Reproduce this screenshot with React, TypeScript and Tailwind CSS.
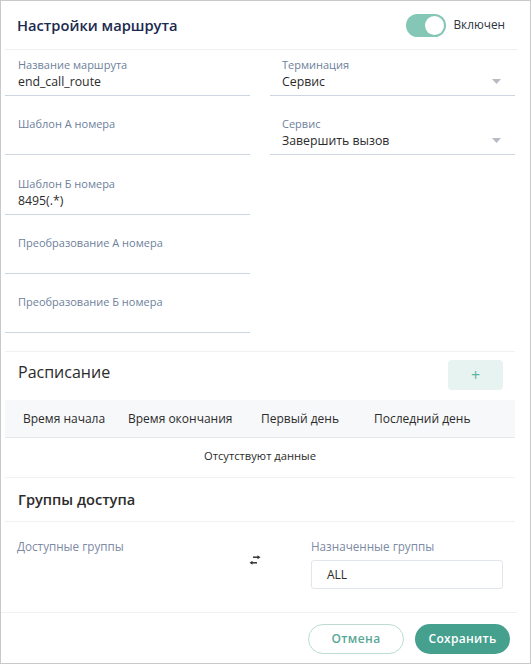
import React from 'react';

const FONT = "font-['Open_Sans',sans-serif]";

type FieldProps = { label: string; value?: string; select?: boolean; right?: boolean };

function Field({ label, value, select, right }: FieldProps) {
  return (
    <div className={`h-[46px] border-b border-[#cdd5e0] pt-[7px] relative ${right ? 'pl-[12px]' : 'pl-[13px]'}`}>
      <div className="text-[11px] leading-[16px] text-[#6e7f9c]">{label}</div>
      <div className="text-[12.3px] leading-[18px] text-[#2b2b2b]">{value ?? ''}</div>
      {select && (
        <svg className="absolute right-[14px] top-[29px]" width="9" height="5" viewBox="0 0 9 5">
          <path d="M0 0 L9 0 L4.5 5 Z" fill="#b7bcc4" />
        </svg>
      )}
    </div>
  );
}

function SwapIcon() {
  return (
    <svg width="12" height="10" viewBox="0 0 12 10">
      <path d="M4 2.2 H9.5" stroke="#333" strokeWidth="1.5" />
      <path d="M8.5 0.2 L11.5 2.2 L8.5 4.2 Z" fill="#333" />
      <path d="M8 7.8 H2.5" stroke="#333" strokeWidth="1.5" />
      <path d="M3.5 5.8 L0.5 7.8 L3.5 9.8 Z" fill="#333" />
    </svg>
  );
}

export default function App() {
  return (
    <div className={`${FONT} w-[531px] h-[664px] bg-white border border-[#c9c9c9] flex flex-col overflow-hidden`}>
      <div className="w-[516px] flex flex-col flex-1">
        {/* header */}
        <div className="ml-[4px] h-[49px] flex items-center justify-between border-b border-[#eef0f2] pl-[12px] pr-[12px]">
          <h2 className="text-[14.7px] font-semibold text-[#1b2a4e]">Настройки маршрута</h2>
          <div className="flex items-center gap-[8px]">
            <div className="w-[40px] h-[23px] rounded-full bg-[#84c7b6] flex items-center justify-end pr-[2px]">
              <div className="w-[19px] h-[19px] rounded-full bg-white" />
            </div>
            <span className="text-[11.8px] text-[#2e3440]">Включен</span>
          </div>
        </div>

        <div className="ml-[4px] w-[510px] flex flex-col">
          {/* fields */}
          <div className="grid grid-cols-[245px_245px] gap-x-[20px] gap-y-[13.25px]">
            <Field label="Название маршрута" value="end_call_route" />
            <Field label="Терминация" value="Сервис" select right />
            <Field label="Шаблон А номера" />
            <Field label="Сервис" value="Завершить вызов" select right />
            <Field label="Шаблон Б номера" value="8495(.*)" />
            <div />
            <Field label="Преобразование А номера" />
            <div />
            <Field label="Преобразование Б номера" />
            <div />
          </div>

          {/* schedule */}
          <div className="mt-[18px] border-t border-[#f0f1f3] h-[49px] flex items-start justify-between pl-[13px] pr-[12px] pt-[8px]">
            <h3 className="text-[16px] leading-[26px] text-[#2b2b2b] mt-[-1px]">Расписание</h3>
            <button className="w-[55px] h-[30px] rounded-[4px] bg-[#e7f3f0] text-[#5cb39f] text-[16px] leading-none flex items-center justify-center">
              +
            </button>
          </div>
          <div className="h-[38px] bg-[#f7f8fa] border-b border-[#e6e8eb] flex items-center text-[12px] text-[#2b2b2b]">
            <div className="w-[105px] pl-[18px]">Время начала</div>
            <div className="w-[133px] pl-[18px]">Время окончания</div>
            <div className="w-[113px] pl-[18px]">Первый день</div>
            <div className="flex-1 pl-[18px]">Последний день</div>
          </div>
          <div className="h-[40px] border-b border-[#f0f1f3] flex items-center justify-center text-[11.2px] text-[#2b2b2b] pb-[2px]">
            Отсутствуют данные
          </div>

          {/* groups */}
          <div className="h-[44px] border-b border-[#f0f1f3] flex items-center pl-[13px]">
            <h3 className="text-[14.6px] font-semibold text-[#2b2b2b]">Группы доступа</h3>
          </div>
          <div className="h-[90px] flex pt-[15px] pl-[12px]">
            <div className="w-[232px] text-[11.7px] leading-[18px] text-[#7d8aa3]">Доступные группы</div>
            <div className="w-[12px] pt-[18px]">
              <SwapIcon />
            </div>
            <div className="ml-[50px] w-[192px]">
              <div className="text-[11.7px] leading-[18px] text-[#7d8aa3]">Назначенные группы</div>
              <div className="mt-[5px] h-[29px] border border-[#e1e6ec] rounded-[3px] flex items-center pl-[15px] text-[12px] text-[#2b2b2b]">
                ALL
              </div>
            </div>
          </div>
        </div>

        {/* footer */}
        <div className="border-t border-[#eef0f2] flex justify-end gap-[11px] pt-[11px] pr-[7px]">
          <button className="w-[96px] h-[30px] rounded-full border border-[#bcdcd4] text-[#5aa797] text-[12px] font-semibold tracking-[0.4px]">
            Отмена
          </button>
          <button className="w-[95px] h-[30px] rounded-full bg-[#45a08d] text-white text-[12px] font-semibold tracking-[0.3px]">
            Сохранить
          </button>
        </div>
      </div>
    </div>
  );
}
